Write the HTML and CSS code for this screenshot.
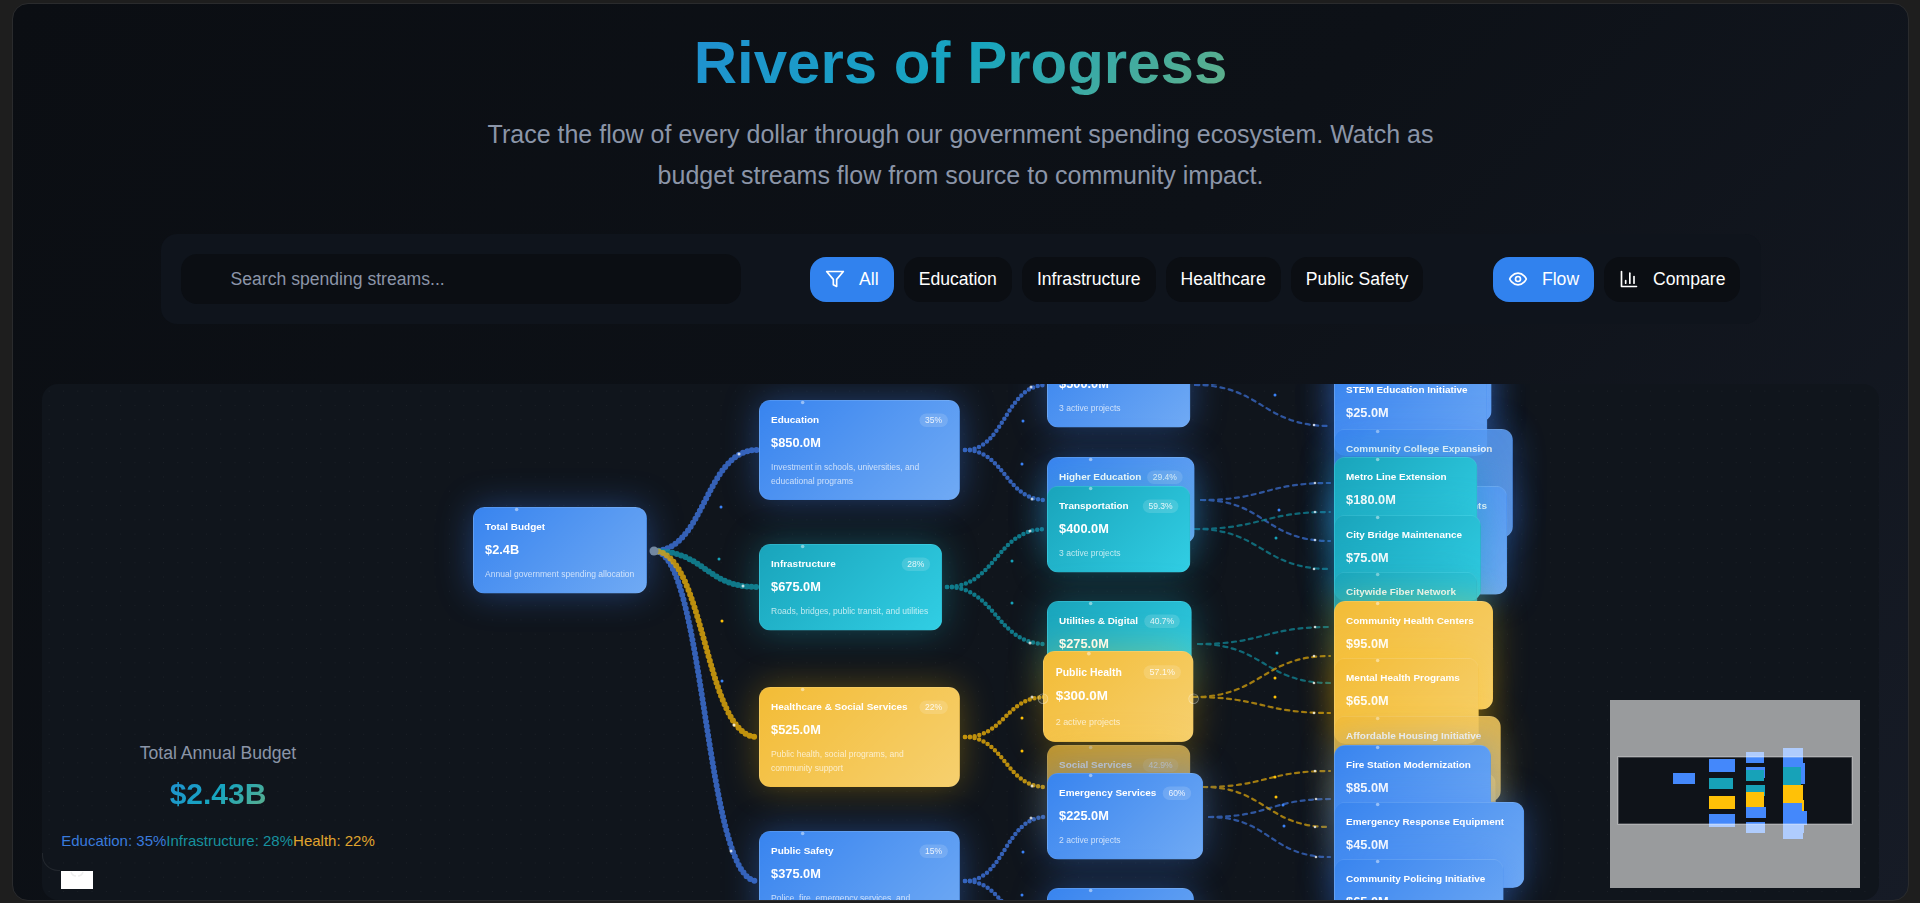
FILE: index.html
```html
<!DOCTYPE html>
<html lang="en">
<head>
  <meta charset="UTF-8" />
  <meta name="viewport" content="width=device-width, initial-scale=1.0"/>
  <title>Rivers of Progress</title>
  <link rel="stylesheet" href="styles.css">
</head>
<body>

  <div class="app">
    <header class="page-header">
      <h1 class="gradient-text">Rivers of Progress</h1>
      <p>Trace the flow of every dollar through our government spending ecosystem. Watch as budget streams flow from source to community impact.</p>
    </header>

    <section class="controls">
      <input class="search" type="text" placeholder="Search spending streams...">
      <div class="btn-group">
        <button class="btn active">
          <svg class="icon" viewBox="0 0 24 24"><polygon points="22 3 2 3 10 12.46 10 19 14 21 14 12.46 22 3"/></svg>
          All
        </button>
        <button class="btn">Education</button>
        <button class="btn">Infrastructure</button>
        <button class="btn">Healthcare</button>
        <button class="btn">Public Safety</button>
      </div>
      <div class="btn-group">
        <button class="btn active">
          <svg class="icon" viewBox="0 0 24 24"><path d="M2 12s3-7 10-7 10 7 10 7-3 7-10 7-10-7-10-7Z"/><circle cx="12" cy="12" r="3"/></svg>
          Flow
        </button>
        <button class="btn">
          <svg class="icon" viewBox="0 0 24 24"><path d="M3 3v18h18"/><path d="M18 17V9"/><path d="M13 17V5"/><path d="M8 17v-3"/></svg>
          Compare
        </button>
      </div>
    </section>

    <main class="canvas">
      <svg class="flows" width="1837" height="517" viewBox="42 384 1837 517">
        <g class="flow-l1 flow-blue">
          <path d="M654 551C705 551 705 450 757 450"/>
          <path d="M654 551C705 551 705 881 757 881"/>
        </g>
        <g class="flow-l1 flow-teal">
          <path d="M654 551C705 551 705 587 757 587"/>
        </g>
        <g class="flow-l1 flow-yellow">
          <path d="M654 551C705 551 705 737 757 737"/>
        </g>
        <circle class="source-dot" cx="654" cy="551" r="4.5"/>

        <g class="flow-l2 flow-blue">
          <path d="M965 450C1005 450 1005 385 1046 385"/>
          <path d="M965 450C1005 450 1005 500 1046 500"/>
          <path d="M965 881C1005 881 1005 817 1046 817"/>
          <path d="M965 881C1005 881 1005 930 1046 930"/>
        </g>
        <g class="flow-l2 flow-teal">
          <path d="M947 587C996 587 996 529 1046 529"/>
          <path d="M947 587C996 587 996 644 1046 644"/>
        </g>
        <g class="flow-l2 flow-yellow">
          <path d="M965 737C1005 737 1005 697 1046 697"/>
          <path d="M965 737C1005 737 1005 787 1046 787"/>
        </g>

        <g class="flow-l3 flow-blue">
          <path d="M1195 385C1262 385 1262 426 1330 426"/>
          <path d="M1195 385C1262 385 1262 345 1330 345"/>
          <path d="M1201 500C1265 500 1265 483 1330 483"/>
          <path d="M1201 500C1265 500 1265 541 1330 541"/>
          <path d="M1209 817C1270 817 1270 799 1330 799"/>
          <path d="M1209 817C1270 817 1270 857 1330 857"/>
        </g>
        <g class="flow-l3 flow-teal">
          <path d="M1195 529C1262 529 1262 512 1330 512"/>
          <path d="M1195 529C1262 529 1262 569 1330 569"/>
          <path d="M1198 644C1264 644 1264 627 1330 627"/>
          <path d="M1198 644C1264 644 1264 683 1330 683"/>
        </g>
        <g class="flow-l3 flow-yellow">
          <path d="M1193 697C1262 697 1262 656 1330 656"/>
          <path d="M1193 697C1262 697 1262 713 1330 713"/>
          <path d="M1203 787C1266 787 1266 771 1330 771"/>
          <path d="M1203 787C1266 787 1266 827 1330 827"/>
        </g>

        <!-- particles travelling on the streams -->
        <g class="spark">
          <circle cx="739" cy="454" r="1.5"/><circle cx="743" cy="586" r="1.5"/><circle cx="734" cy="725" r="1.5"/><circle cx="731" cy="851" r="1.5"/>
          <circle cx="1031" cy="387" r="1.5"/><circle cx="1032" cy="499" r="1.5"/><circle cx="1030" cy="531" r="1.5"/><circle cx="1030" cy="643" r="1.5"/>
          <circle cx="1032" cy="697" r="1.5"/><circle cx="1032" cy="786" r="1.5"/><circle cx="1031" cy="818" r="1.5"/>
          <circle cx="1314" cy="425" r="1.3"/><circle cx="1315" cy="483" r="1.3"/><circle cx="1315" cy="512" r="1.3"/><circle cx="1315" cy="540" r="1.3"/>
          <circle cx="1314" cy="569" r="1.3"/><circle cx="1315" cy="627" r="1.3"/><circle cx="1314" cy="683" r="1.3"/><circle cx="1314" cy="656" r="1.3"/>
          <circle cx="1314" cy="713" r="1.3"/><circle cx="1315" cy="771" r="1.3"/><circle cx="1315" cy="827" r="1.3"/><circle cx="1316" cy="799" r="1.3"/><circle cx="1316" cy="857" r="1.3"/>
        </g>
        <g class="drift-blue">
          <circle cx="721" cy="507" r="1.5"/><circle cx="722" cy="681" r="1.5"/><circle cx="1023" cy="421" r="1.5"/><circle cx="1022" cy="464" r="1.5"/>
          <circle cx="1023" cy="852" r="1.5"/><circle cx="1022" cy="895" r="1.5"/><circle cx="1275" cy="395" r="1.5"/><circle cx="1279" cy="510" r="1.5"/>
          <circle cx="1283" cy="805" r="1.5"/><circle cx="1284" cy="826" r="1.5"/>
        </g>
        <g class="drift-teal">
          <circle cx="719" cy="559" r="1.5"/><circle cx="1012" cy="561" r="1.5"/><circle cx="1012" cy="603" r="1.5"/><circle cx="1276" cy="538" r="1.5"/><circle cx="1277" cy="653" r="1.5"/>
        </g>
        <g class="drift-yellow">
          <circle cx="722" cy="621" r="1.5"/><circle cx="1022" cy="718" r="1.5"/><circle cx="1022" cy="751" r="1.5"/><circle cx="1275" cy="678" r="1.5"/>
          <circle cx="1275" cy="697" r="1.5"/><circle cx="1275" cy="777" r="1.5"/><circle cx="1276" cy="797" r="1.5"/>
        </g>
      </svg>

      <!-- level 1 -->
      <div class="node blue n-total">
        <div class="node-head"><span class="node-title">Total Budget</span></div>
        <div class="node-value">$2.4B</div>
        <p class="node-desc">Annual government spending allocation</p>
      </div>

      <!-- level 2 -->
      <div class="node blue n-education">
        <div class="node-head"><span class="node-title">Education</span><span class="badge">35%</span></div>
        <div class="node-value">$850.0M</div>
        <p class="node-desc">Investment in schools, universities, and educational programs</p>
      </div>
      <div class="node teal n-infrastructure">
        <div class="node-head"><span class="node-title">Infrastructure</span><span class="badge">28%</span></div>
        <div class="node-value">$675.0M</div>
        <p class="node-desc">Roads, bridges, public transit, and utilities</p>
      </div>
      <div class="node yellow n-healthcare">
        <div class="node-head"><span class="node-title">Healthcare &amp; Social Services</span><span class="badge">22%</span></div>
        <div class="node-value">$525.0M</div>
        <p class="node-desc">Public health, social programs, and community support</p>
      </div>
      <div class="node blue n-safety">
        <div class="node-head"><span class="node-title">Public Safety</span><span class="badge">15%</span></div>
        <div class="node-value">$375.0M</div>
        <p class="node-desc">Police, fire, emergency services, and community safety</p>
      </div>

      <!-- level 3 -->
      <div class="node blue n-k12">
        <div class="node-head"><span class="node-title">K-12 Education</span><span class="badge">58.8%</span></div>
        <div class="node-value">$500.0M</div>
        <p class="node-desc">3 active projects</p>
      </div>
      <div class="node blue n-higher">
        <div class="node-head"><span class="node-title">Higher Education</span><span class="badge">29.4%</span></div>
        <div class="node-value">$250.0M</div>
        <p class="node-desc">2 active projects</p>
      </div>
      <div class="node teal n-transport">
        <div class="node-head"><span class="node-title">Transportation</span><span class="badge">59.3%</span></div>
        <div class="node-value">$400.0M</div>
        <p class="node-desc">3 active projects</p>
      </div>
      <div class="node teal n-utilities">
        <div class="node-head"><span class="node-title">Utilities &amp; Digital</span><span class="badge">40.7%</span></div>
        <div class="node-value">$275.0M</div>
        <p class="node-desc">2 active projects</p>
      </div>
      <div class="node yellow n-public-health hovered">
        <span class="port port-left"></span><span class="port port-right"></span>
        <div class="node-head"><span class="node-title">Public Health</span><span class="badge">57.1%</span></div>
        <div class="node-value">$300.0M</div>
        <p class="node-desc">2 active projects</p>
      </div>
      <div class="node yellow n-social fade-3">
        <div class="node-head"><span class="node-title">Social Services</span><span class="badge">42.9%</span></div>
        <div class="node-value">$225.0M</div>
        <p class="node-desc">2 active projects</p>
      </div>
      <div class="node blue n-emergency">
        <div class="node-head"><span class="node-title">Emergency Services</span><span class="badge">60%</span></div>
        <div class="node-value">$225.0M</div>
        <p class="node-desc">2 active projects</p>
      </div>
      <div class="node blue n-community">
        <div class="node-head"><span class="node-title">Community Safety</span><span class="badge">40%</span></div>
        <div class="node-value">$150.0M</div>
        <p class="node-desc">2 active projects</p>
      </div>

      <!-- level 4 -->
      <div class="node blue leaf n-smart">
        <div class="node-head"><span class="node-title">School Modernization</span></div>
        <div class="node-value">$300.0M</div>
      </div>
      <div class="node blue leaf n-stem">
        <div class="node-head"><span class="node-title">STEM Education Initiative</span></div>
        <div class="node-value">$25.0M</div>
      </div>
      <div class="node blue leaf tall fade-1 n-college">
        <div class="node-head"><span class="node-title">Community College Expansion</span></div>
        <div class="node-value">$120.0M</div>
      </div>
      <div class="node blue leaf tall n-improve">
        <div class="node-head"><span class="node-title">School Facility Improvements</span></div>
        <div class="node-value">$130.0M</div>
      </div>
      <div class="node teal leaf n-metro">
        <div class="node-head"><span class="node-title">Metro Line Extension</span></div>
        <div class="node-value">$180.0M</div>
      </div>
      <div class="node teal leaf n-bridge">
        <div class="node-head"><span class="node-title">City Bridge Maintenance</span></div>
        <div class="node-value">$75.0M</div>
      </div>
      <div class="node teal leaf fade-2 n-fiber">
        <div class="node-head"><span class="node-title">Citywide Fiber Network</span></div>
        <div class="node-value">$110.0M</div>
      </div>
      <div class="node yellow leaf tall n-clinics">
        <div class="node-head"><span class="node-title">Community Health Centers</span></div>
        <div class="node-value">$95.0M</div>
      </div>
      <div class="node yellow leaf n-mental">
        <div class="node-head"><span class="node-title">Mental Health Programs</span></div>
        <div class="node-value">$65.0M</div>
      </div>
      <div class="node yellow leaf fade-2 n-housing">
        <div class="node-head"><span class="node-title">Affordable Housing Initiative</span></div>
        <div class="node-value">$140.0M</div>
      </div>
      <div class="node yellow leaf fade-2 n-senior">
        <div class="node-head"><span class="node-title">Senior Care Services</span></div>
        <div class="node-value">$85.0M</div>
      </div>
      <div class="node blue leaf n-fire">
        <div class="node-head"><span class="node-title">Fire Station Modernization</span></div>
        <div class="node-value">$85.0M</div>
      </div>
      <div class="node blue leaf n-equipment">
        <div class="node-head"><span class="node-title">Emergency Response Equipment</span></div>
        <div class="node-value">$45.0M</div>
      </div>
      <div class="node blue leaf n-policing">
        <div class="node-head"><span class="node-title">Community Policing Initiative</span></div>
        <div class="node-value">$65.0M</div>
      </div>

      <aside class="stats">
        <div class="stats-label">Total Annual Budget</div>
        <div class="stats-value"><span class="gradient-text">$2.43B</span></div>
        <div class="stats-legend">
          <span class="legend-blue">Education: 35%</span>
          <span class="legend-teal">Infrastructure: 28%</span>
          <span class="legend-yellow">Health: 22%</span>
        </div>
      </aside>

      <button class="play-btn" aria-label="Reset view">
        <svg width="32" height="18" viewBox="0 0 32 18"><path d="M10 1c1 3 3 4 5 4M22 1c-1 3-3 4-5 4"/></svg>
      </button>

      <svg class="minimap" width="250" height="188" viewBox="0 0 250 188">
        <rect class="mm-bg" width="250" height="188"/>
        <g class="mm-blue">
          <rect x="63" y="73" width="22" height="11"/>
          <rect x="99" y="59" width="26" height="13"/>
          <rect x="99" y="114" width="26" height="13"/>
          <rect x="136" y="52" width="18" height="11"/>
          <rect x="136" y="67" width="19" height="11"/>
        </g>
        <g class="mm-teal">
          <rect x="99" y="78" width="24" height="11"/>
          <rect x="136" y="70" width="18" height="11"/>
          <rect x="136" y="85" width="19" height="11"/>
        </g>
        <g class="mm-yellow">
          <rect x="99" y="96" width="26" height="13"/>
          <rect x="136" y="92" width="18" height="15"/>
        </g>
        <g class="mm-blue">
          <rect x="136" y="107" width="20" height="11"/>
          <rect x="136" y="122" width="19" height="11"/>
          <rect x="173" y="48" width="20" height="19"/>
          <rect x="173" y="63" width="22" height="21"/>
        </g>
        <g class="mm-teal"><rect x="173" y="67" width="18" height="18"/></g>
        <g class="mm-yellow">
          <rect x="173" y="85" width="20" height="18"/>
          <rect x="173" y="100" width="21" height="18"/>
        </g>
        <g class="mm-blue">
          <rect x="173" y="103" width="19" height="22"/>
          <rect x="173" y="111" width="24" height="14"/>
          <rect x="173" y="125" width="21" height="8"/>
          <rect x="173" y="131" width="20" height="8"/>
        </g>
        <path class="mm-shade" fill-rule="evenodd" d="M0 0H250V188H0ZM8 57V124H242V57Z"/>
        <rect class="mm-viewport" x="8" y="57" width="234" height="67"/>
      </svg>
    </main>
  </div>

</body>
</html>
```

FILE: styles.css
```css
* {
  box-sizing: border-box;
}

html, body {
  height: 100%;
}

body {
  margin: 0;
  padding: 3px 11px 2px 12px;
  overflow: hidden;
  background: #1e1e1e;
  font-family: "Liberation Sans", Arial, sans-serif;
  color: #fff;
}

.app {
  display: flex;
  flex-direction: column;
  height: 100%;
  padding: 0 29px;
  overflow: hidden;
  border: 1px solid #2a2b2d;
  border-radius: 16px;
  background: linear-gradient(135deg, #0b0e13 0%, #0d1117 50%, #161b26 100%);
}

.gradient-text {
  display: inline-block;
  background: linear-gradient(135deg, #2090d2 0%, #17a5bf 50%, #62b088 100%);
  -webkit-background-clip: text;
  background-clip: text;
  color: transparent;
}

.page-header {
  padding-top: 23px;
  text-align: center;
}

.page-header h1 {
  margin: 0 0 15px;
  font-size: 60px;
  line-height: 72px;
  font-weight: 700;
}

.page-header p {
  max-width: 1000px;
  margin: 0 auto;
  font-size: 25px;
  line-height: 41px;
  color: #8b95a8;
}

.controls {
  display: flex;
  flex: none;
  justify-content: space-between;
  align-items: center;
  width: 1600px;
  height: 90px;
  margin: 38px auto 60px;
  padding: 0 20px;
  border-radius: 16px;
  background: #0f141c;
}

.search {
  width: 560px;
  height: 50px;
  padding: 0 20px 0 50px;
  border: 0;
  border-radius: 16px;
  background: #0b0e13;
  font: 17.6px "Liberation Sans", Arial, sans-serif;
  color: #fff;
}

.search::placeholder {
  color: #8b95a8;
  opacity: 1;
}

.btn-group {
  display: flex;
  gap: 10px;
}

.btn {
  display: flex;
  align-items: center;
  gap: 14px;
  height: 45px;
  padding: 0 15px;
  border: 0;
  border-radius: 16px;
  background: #0b0e13;
  font: 17.6px "Liberation Sans", Arial, sans-serif;
  color: #fff;
}

.btn.active {
  background: #3182ee;
}

.icon {
  width: 20px;
  height: 20px;
  fill: none;
  stroke: currentColor;
  stroke-width: 2;
  stroke-linecap: round;
  stroke-linejoin: round;
}

/* diagram */
.canvas {
  position: relative;
  flex: 1;
  overflow: hidden;
  border-radius: 16px;
  background-color: #10151c;
  background-image: radial-gradient(circle, rgba(255, 255, 255, 0.05) 0.6px, transparent 0.8px);
  background-size: 14.3px 14.3px;
}

.flows {
  position: absolute;
  left: 0;
  top: 0;
}

.flows path {
  fill: none;
  stroke-linecap: round;
}

.flow-l1 {
  stroke-width: 6;
  stroke-dasharray: 0 4.6;
  opacity: 0.85;
}

.flow-l2 {
  stroke-width: 4.5;
  stroke-dasharray: 0 4.8;
  opacity: 0.85;
}

.flow-l3 {
  stroke-width: 2.2;
  stroke-dasharray: 4 4.5;
  opacity: 0.72;
}

.flow-blue {
  stroke: #3c6fd2;
}

.flow-teal {
  stroke: #118a9b;
}

.flow-yellow {
  stroke: #dba40c;
}

.source-dot {
  fill: #7c8a94;
}

.spark {
  fill: rgba(255, 255, 255, 0.8);
}

.drift-blue {
  fill: #3b82f6;
}

.drift-teal {
  fill: #17a2b8;
}

.drift-yellow {
  fill: #ffc107;
}

/* nodes are drawn at full size and shrunk by the diagram zoom */
.node {
  position: absolute;
  padding: 16px;
  border: 1px solid rgba(255, 255, 255, 0.08);
  border-radius: 16px;
  transform: scale(0.71);
  transform-origin: 0 0;
  color: #fff;
}

.node::before {
  content: "";
  position: absolute;
  left: 58px;
  top: 0;
  width: 5px;
  height: 5px;
  border-radius: 50%;
  background: rgba(255, 255, 255, 0.45);
}

.node.blue {
  background: linear-gradient(135deg, #3884ef 0%, #70aaf4 100%);
  box-shadow: 0 0 50px rgba(59, 130, 246, 0.38);
}

.node.teal {
  background: linear-gradient(135deg, #19a4bb 0%, #31cee4 100%);
  box-shadow: 0 0 50px rgba(23, 162, 184, 0.38);
}

.node.yellow {
  background: linear-gradient(135deg, #f3bc36 0%, #f6d06f 100%);
  box-shadow: 0 0 50px rgba(255, 193, 7, 0.3);
}

.node.leaf {
  height: 121px;
}

.node.leaf.tall {
  height: 153px;
}

.node.hovered {
  transform: scale(0.7455);
}

.fade-1 {
  opacity: 0.9;
}

.fade-2 {
  opacity: 0.88;
}

.fade-3 {
  opacity: 0.75;
}

.node-head {
  display: flex;
  justify-content: space-between;
  align-items: center;
  min-height: 22px;
  margin-bottom: 8px;
}

.node-title {
  font-size: 14px;
  font-weight: 700;
  white-space: nowrap;
}

.badge {
  padding: 2px 8px;
  border-radius: 10px;
  background: rgba(255, 255, 255, 0.14);
  font-size: 12px;
  line-height: 15px;
  color: rgba(255, 255, 255, 0.85);
}

.node-value {
  margin-bottom: 12px;
  font-size: 18px;
  line-height: 27px;
  font-weight: 700;
}

.node-desc {
  max-width: 240px;
  margin: 0;
  font-size: 12px;
  line-height: 19.2px;
  color: rgba(255, 255, 255, 0.7);
}

.port {
  position: absolute;
  top: 50%;
  width: 14px;
  height: 14px;
  margin-top: -4px;
  border: 1px solid rgba(255, 255, 255, 0.35);
  border-radius: 50%;
  background: rgba(255, 255, 255, 0.08);
}

.port-left {
  left: -8px;
}

.port-right {
  right: -8px;
}

.n-total { left: 431px; top: 123px; width: 245px; }
.n-education { left: 717px; top: 16px; width: 283px; }
.n-infrastructure { left: 717px; top: 160px; width: 258px; }
.n-healthcare { left: 717px; top: 303px; width: 283px; }
.n-safety { left: 717px; top: 447px; width: 283px; }

.n-k12 { left: 1005px; top: -43px; width: 202px; }
.n-higher { left: 1005px; top: 73px; width: 208px; }
.n-transport { left: 1005px; top: 102px; width: 202px; }
.n-utilities { left: 1005px; top: 217px; width: 204px; }
.n-public-health { left: 1001px; top: 267px; width: 202px; }
.n-social { left: 1005px; top: 361px; width: 202px; }
.n-emergency { left: 1005px; top: 389px; width: 220px; }
.n-community { left: 1005px; top: 504px; width: 207px; }

.n-smart { left: 1292px; top: -48px; width: 222px; }
.n-stem { left: 1292px; top: -14px; width: 216px; }
.n-college { left: 1292px; top: 45px; width: 252px; }
.n-improve { left: 1292px; top: 102px; width: 244px; }
.n-metro { left: 1292px; top: 73px; width: 202px; }
.n-bridge { left: 1292px; top: 131px; width: 207px; }
.n-fiber { left: 1292px; top: 188px; width: 202px; }
.n-clinics { left: 1292px; top: 217px; width: 224px; }
.n-mental { left: 1292px; top: 274px; width: 204px; }
.n-housing { left: 1292px; top: 332px; width: 235px; }
.n-senior { left: 1292px; top: 389px; width: 228px; }
.n-fire { left: 1292px; top: 361px; width: 221px; }
.n-equipment { left: 1292px; top: 418px; width: 268px; }
.n-policing { left: 1292px; top: 475px; width: 239px; }

/* overlays */
.stats {
  position: absolute;
  left: 0;
  top: 341px;
  width: 352px;
  height: 146px;
  padding-top: 17px;
  text-align: center;
}

.stats::after {
  content: "";
  position: absolute;
  left: 0;
  bottom: 0;
  width: 17px;
  height: 17px;
  border-left: 1px solid rgba(255, 255, 255, 0.08);
  border-bottom: 1px solid rgba(255, 255, 255, 0.08);
  border-bottom-left-radius: 16px;
}

.stats-label {
  font-size: 17.6px;
  line-height: 22px;
  color: #8b95a8;
}

.stats-value {
  margin-top: 12px;
  font-size: 30px;
  line-height: 36px;
  font-weight: 700;
}

.stats-legend {
  display: flex;
  justify-content: center;
  margin-top: 20px;
  font-size: 15px;
  line-height: 18px;
}

.legend-blue {
  color: #3a7bdc;
}

.legend-teal {
  color: #17929f;
}

.legend-yellow {
  color: #e0a52e;
}

.play-btn {
  position: absolute;
  left: 19px;
  top: 487px;
  width: 32px;
  height: 18px;
  padding: 0;
  border: 0;
  background: #fff;
}

.play-btn svg {
  display: block;
  fill: none;
  stroke: #efefef;
  stroke-width: 1.5;
}

.minimap {
  position: absolute;
  right: 19px;
  bottom: 12px;
}

.mm-bg {
  fill: #0f1319;
}

.mm-blue {
  fill: #4488fb;
}

.mm-teal {
  fill: #17a2b8;
}

.mm-yellow {
  fill: #ffc107;
}

.mm-shade {
  fill: rgba(255, 255, 255, 0.575);
}

.mm-viewport {
  fill: none;
  stroke: rgba(255, 255, 255, 0.3);
  stroke-width: 1.5;
}
```
